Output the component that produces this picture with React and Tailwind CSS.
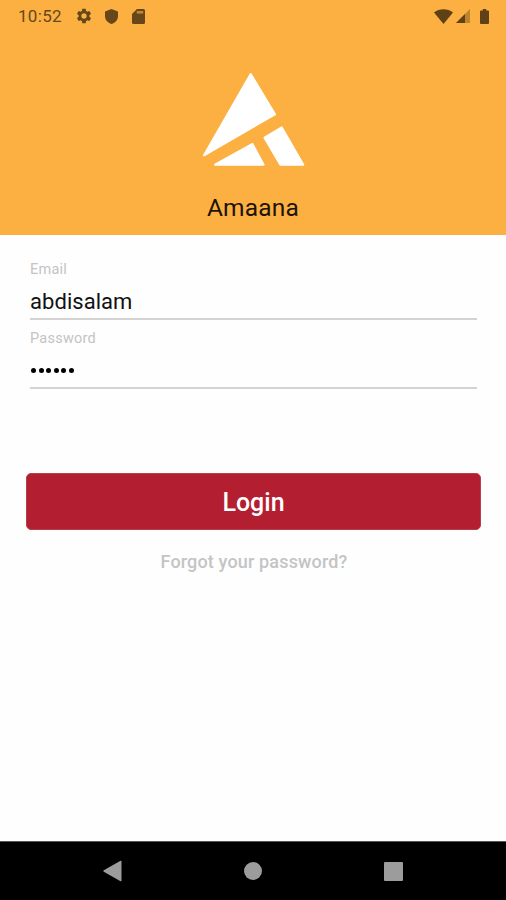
import { MdSettings } from "react-icons/md"

function StatusBar() {
  return (
    <div className="flex h-8 items-center pl-[18px] pr-4 text-[#674719]">
      <span className="w-[58px] text-[17px] leading-8 tracking-[0.3px]">10:52</span>
      <MdSettings size={18} className="-ml-px" />
      <svg width="13" height="15" viewBox="0 0 13 15" className="ml-[12px]" fill="currentColor">
        <path d="M6.5 0 13 2.4V7c0 3.8-2.7 6.9-6.5 8C2.7 13.9 0 10.8 0 7V2.4Z" />
      </svg>
      <svg width="13" height="15" viewBox="0 0 13 15" className="ml-[14px]" fill="currentColor">
        <path d="M5 0h6.5A1.5 1.5 0 0 1 13 1.5v12a1.5 1.5 0 0 1-1.5 1.5h-10A1.5 1.5 0 0 1 0 13.5V5Z" />
        <path d="M4.8 2h6.4v2.6H4.8Z" fill="#fcb042" opacity=".6" />
      </svg>
      <div className="ml-auto flex items-center text-[#5f4115]">
        <svg width="19" height="15" viewBox="0 0 19 15" fill="currentColor">
          <path d="M0 3.5C5.5-.8 13.5-.8 19 3.5L9.5 15Z" />
        </svg>
        <svg width="14" height="14" viewBox="0 0 14 14" className="ml-[3px]" fill="currentColor">
          <path d="M14 0v14H0Z" opacity=".4" />
          <path d="M9 5v9H0Z" />
        </svg>
        <svg width="9" height="15" viewBox="0 0 9 15" className="ml-[10px] mr-[1px]" fill="currentColor">
          <path d="M2.8 0h3.4v1.5H8q1 0 1 1V14q0 1-1 1H1q-1 0-1-1V2.5q0-1 1-1h1.8Z" />
        </svg>
      </div>
    </div>
  )
}

function Logo() {
  return (
    <svg
      width="104"
      height="96"
      viewBox="202 71 104 96"
      className="ml-[2px]"
      fill="#fff"
      stroke="#fff"
      strokeWidth="2"
      strokeLinejoin="round"
    >
      <path d="M250.7 74 275 114.3 204 155.3Z" />
      <path d="M252.5 144 263.6 164.7H215Z" />
      <path d="M264.5 137.7 281.7 127.3 303.3 164.7H280.3Z" />
    </svg>
  )
}

function Field({ label, children }) {
  return (
    <div className="h-[69px] border-b-2 border-[#d3d3d3] pt-[9px]">
      <label className="block text-[14.5px] leading-5 tracking-[0.25px] text-[#c4c4c4]">{label}</label>
      {children}
    </div>
  )
}

export default function App() {
  return (
    <div className="flex h-[900px] w-[506px] flex-col overflow-hidden bg-[#fefefe] font-['Roboto','Liberation_Sans',sans-serif]">
      <header className="h-[235px] bg-[#fcb042]">
        <StatusBar />
        <div className="flex flex-col items-center pt-[39px]">
          <Logo />
          <h1 className="mt-[25px] text-[24.5px] leading-8 tracking-[0.2px] text-[#1d1408]">Amaana</h1>
        </div>
      </header>

      <main className="flex flex-1 flex-col">
        <div className="mx-[30px] mt-4 w-[447px]">
          <Field label="Email">
            <div className="mt-[6px] text-[22px] leading-8 tracking-[0.05px] text-[#111]">abdisalam</div>
          </Field>
          <Field label="Password">
            <div className="flex gap-[2.6px] pl-[1px] pt-[19px]">
              {[0, 1, 2, 3, 4, 5].map(i => (
                <span key={i} className="size-[5px] rounded-full bg-black" />
              ))}
            </div>
          </Field>
        </div>

        <button className="ml-[26px] mt-[84px] h-[57px] w-[455px] rounded-[5px] border border-[#b5404c] bg-[#b31e30] pt-[2px] text-[25px] font-medium text-white">
          Login
        </button>
        <a className="ml-[2px] mt-5 text-center text-[18px] font-medium leading-6 tracking-[0.15px] text-[#c4c4c4]">
          Forgot your password?
        </a>
      </main>

      <nav className="flex h-[59px] items-center border-t border-[#555] bg-black pl-[103px]">
        <svg width="19" height="22" viewBox="0 0 19 22" fill="#9c9c9c">
          <path d="M17.5.8q1-.5 1 .6v19.2q0 1.1-1 .6L.8 11.7q-1-.7 0-1.4Z" />
        </svg>
        <span className="ml-[122px] size-[18px] rounded-full bg-[#9c9c9c]" />
        <span className="ml-[122px] size-[19px] rounded-[1px] bg-[#9c9c9c]" />
      </nav>
    </div>
  )
}
